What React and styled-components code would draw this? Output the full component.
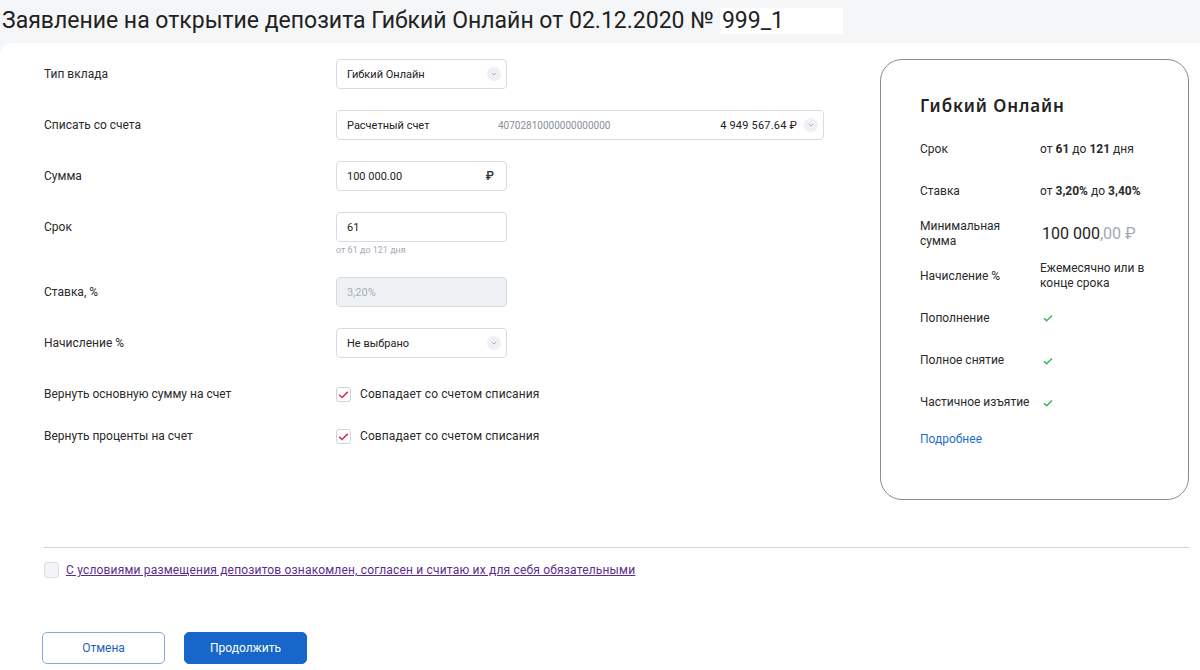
import React from 'react';
import styled, { createGlobalStyle } from 'styled-components';

const GlobalStyle = createGlobalStyle`
  html, body {
    margin: 0;
    padding: 0;
    background: #f5f6f8;
    font-family: Roboto, "Liberation Sans", sans-serif;
    color: #222;
  }
  * { box-sizing: border-box; }
`;

const Chevron = () => (
  <ChevronCircle>
    <svg width="8" height="8" viewBox="0 0 8 8">
      <path d="M2 3l2 2 2-2" fill="none" stroke="#a9b0ba" strokeWidth="1" />
    </svg>
  </ChevronCircle>
);

const Tick = ({ color = '#2fb45c', size = 12 }) => (
  <svg width={size} height={size} viewBox="0 0 12 12">
    <path d="M2 6.2l2.6 2.6L10 3.6" fill="none" stroke={color} strokeWidth="1.4" />
  </svg>
);

const App = () => {
  return (
    <Page>
      <GlobalStyle />
      <Header>
        <HeaderText>Заявление на открытие депозита Гибкий Онлайн от 02.12.2020 №</HeaderText>
        <NumberBox>999_1</NumberBox>
      </Header>

      <Panel>
        <Top>
          <Form>
            <Row>
              <Label>Тип вклада</Label>
              <Box width="171px">
                <Value>Гибкий Онлайн</Value>
                <Chevron />
              </Box>
            </Row>
            <Row>
              <Label>Списать со счета</Label>
              <Box width="488px">
                <AccountName>Расчетный счет</AccountName>
                <AccountNumber>40702810000000000000</AccountNumber>
                <Balance>4 949 567.64 ₽</Balance>
                <Chevron />
              </Box>
            </Row>
            <Row>
              <Label>Сумма</Label>
              <Box width="171px">
                <Value>100 000.00</Value>
                <Rub>₽</Rub>
              </Box>
            </Row>
            <Group>
              <Row>
                <Label>Срок</Label>
                <Box width="171px">
                  <Value>61</Value>
                </Box>
              </Row>
              <Hint>от 61 до 121 дня</Hint>
            </Group>
            <Row>
              <Label>Ставка, %</Label>
              <Box width="171px" disabled>
                <Value muted>3,20%</Value>
              </Box>
            </Row>
            <Row>
              <Label>Начисление %</Label>
              <Box width="171px">
                <Value>Не выбрано</Value>
                <Chevron />
              </Box>
            </Row>
            <Checks>
              <CheckRow>
                <Label>Вернуть основную сумму на счет</Label>
                <CheckLine>
                  <CheckBox><Tick color="#d42a5b" size={13} /></CheckBox>
                  <CheckText>Совпадает со счетом списания</CheckText>
                </CheckLine>
              </CheckRow>
              <CheckRow>
                <Label>Вернуть проценты на счет</Label>
                <CheckLine>
                  <CheckBox><Tick color="#d42a5b" size={13} /></CheckBox>
                  <CheckText>Совпадает со счетом списания</CheckText>
                </CheckLine>
              </CheckRow>
            </Checks>
          </Form>

          <Card>
            <CardTitle>Гибкий Онлайн</CardTitle>
            <InfoRow>
              <InfoLabel>Срок</InfoLabel>
              <InfoValue>от <b>61</b> до <b>121</b> дня</InfoValue>
            </InfoRow>
            <InfoRow>
              <InfoLabel>Ставка</InfoLabel>
              <InfoValue>от <b>3,20%</b> до <b>3,40%</b></InfoValue>
            </InfoRow>
            <InfoRow>
              <InfoLabel>Минимальная<br />сумма</InfoLabel>
              <Amount>100 000<Cents>,00 ₽</Cents></Amount>
            </InfoRow>
            <InfoRow>
              <InfoLabel>Начисление %</InfoLabel>
              <InfoValue>Ежемесячно или в конце срока</InfoValue>
            </InfoRow>
            <InfoRow>
              <InfoLabel>Пополнение</InfoLabel>
              <InfoValue><Tick /></InfoValue>
            </InfoRow>
            <InfoRow>
              <InfoLabel>Полное снятие</InfoLabel>
              <InfoValue><Tick /></InfoValue>
            </InfoRow>
            <InfoRow>
              <InfoLabel>Частичное изъятие</InfoLabel>
              <InfoValue><Tick /></InfoValue>
            </InfoRow>
            <MoreLink href="#">Подробнее</MoreLink>
          </Card>
        </Top>

        <Divider />

        <Consent>
          <EmptyBox />
          <ConsentLink href="#">С условиями размещения депозитов ознакомлен, согласен и считаю их для себя обязательными</ConsentLink>
        </Consent>

        <Buttons>
          <Button>Отмена</Button>
          <Button primary>Продолжить</Button>
        </Buttons>
      </Panel>
    </Page>
  );
};

// стили
const Page = styled.div`
  min-height: 670px;
  display: flex;
  flex-direction: column;
`;

const Header = styled.div`
  height: 43px;
  display: flex;
  align-items: center;
  padding-left: 2px;
  padding-bottom: 2px;
`;

const HeaderText = styled.h1`
  margin: 0;
  font-size: 23px;
  font-weight: 400;
  letter-spacing: 0;
  color: #222;
  white-space: nowrap;
`;

const NumberBox = styled.span`
  margin-left: 6px;
  padding-left: 2px;
  width: 123px;
  height: 26px;
  background: #fff;
  font-size: 23px;
  line-height: 26px;
  color: #222;
`;

const Panel = styled.div`
  flex: 1;
  background: #fff;
  border-top-left-radius: 12px;
  padding: 16px 11px 8px 44px;
`;

const Top = styled.div`
  display: flex;
  align-items: flex-start;
`;

const Form = styled.div`
  flex: 1;
  display: flex;
  flex-direction: column;
  gap: 21px;
`;

const Row = styled.div`
  display: grid;
  grid-template-columns: 292px 1fr;
  align-items: center;
  min-height: 30px;
`;

const Group = styled.div`
  display: flex;
  flex-direction: column;
`;

const Label = styled.div`
  font-size: 12px;
  color: #2a2a2a;
`;

const Box = styled.div`
  width: ${p => p.width};
  height: 30px;
  display: flex;
  align-items: center;
  padding: 0 5px 0 10px;
  border: 1px solid #d8dce2;
  border-radius: 4px;
  background: ${p => (p.disabled ? '#eef1f4' : '#fff')};
`;

const Value = styled.span`
  flex: 1;
  font-size: 11px;
  color: ${p => (p.muted ? '#a7afb8' : '#222')};
`;

const AccountName = styled.span`
  width: 151px;
  font-size: 11px;
  color: #222;
`;

const AccountNumber = styled.span`
  flex: 1;
  font-size: 10px;
  color: #8a9099;
`;

const Balance = styled.span`
  font-size: 11px;
  color: #222;
  letter-spacing: 0.2px;
  margin-right: 7px;
`;

const Rub = styled.span`
  font-size: 12px;
  font-weight: 500;
  color: #333;
  margin-right: 7px;
`;

const ChevronCircle = styled.span`
  width: 14px;
  height: 14px;
  border-radius: 50%;
  background: #eef0f3;
  display: flex;
  align-items: center;
  justify-content: center;
`;

const Hint = styled.div`
  margin: 3px 0 0 292px;
  font-size: 9px;
  color: #a5abb3;
  line-height: 11px;
`;

const Checks = styled.div`
  margin-top: 7px;
  display: flex;
  flex-direction: column;
  gap: 26px;
`;

const CheckRow = styled.div`
  display: grid;
  grid-template-columns: 292px 1fr;
  align-items: center;
  height: 16px;
`;

const CheckLine = styled.div`
  display: flex;
  align-items: center;
  gap: 9px;
`;

const CheckBox = styled.span`
  width: 15px;
  height: 15px;
  border: 1px solid #cfd3d9;
  border-radius: 3px;
  display: flex;
  align-items: center;
  justify-content: center;
  background: #fff;
`;

const CheckText = styled.span`
  font-size: 12px;
  letter-spacing: 0.1px;
  color: #2a2a2a;
`;

const Card = styled.div`
  width: 309px;
  height: 441px;
  border: 1px solid #8c8c8c;
  border-radius: 22px;
  padding: 34px 20px 0 39px;
`;

const CardTitle = styled.div`
  font-family: "Noto Sans", Inter, sans-serif;
  font-size: 17px;
  font-weight: 600;
  letter-spacing: 0.9px;
  color: #222;
  height: 24px;
  line-height: 24px;
  margin-bottom: 10px;
`;

const InfoRow = styled.div`
  display: grid;
  grid-template-columns: 120px 1fr;
  align-items: center;
  height: 42.3px;
`;

const InfoLabel = styled.div`
  font-size: 12px;
  color: #2a2a2a;
  line-height: 15px;
`;

const InfoValue = styled.div`
  font-size: 12px;
  color: #2a2a2a;
  line-height: 15px;
  max-width: 112px;
  display: flex;
  flex-wrap: wrap;
  column-gap: 3px;

  b { font-weight: 700; }
  svg { margin-left: 2px; }
`;

const Amount = styled.div`
  font-size: 16px;
  color: #222;
  padding-left: 2px;
`;

const Cents = styled.span`
  color: #a0a9b6;
`;

const MoreLink = styled.a`
  display: block;
  margin-top: 8px;
  font-size: 12px;
  color: #1e6fcb;
  text-decoration: none;
`;

const Divider = styled.div`
  margin-top: 47px;
  height: 1px;
  background: #d3d3d3;
`;

const Consent = styled.div`
  margin-top: 14px;
  display: flex;
  align-items: center;
  gap: 7px;
`;

const EmptyBox = styled.span`
  width: 15px;
  height: 16px;
  border: 1px solid #dcdfe4;
  border-radius: 3px;
  background: #f3f4f6;
`;

const ConsentLink = styled.a`
  font-size: 12px;
  color: #5b2d8e;
  text-decoration: underline;
  letter-spacing: 0.18px;
`;

const Buttons = styled.div`
  margin-top: 54px;
  margin-left: -2px;
  display: flex;
  gap: 19px;
`;

const Button = styled.button`
  width: 123px;
  height: 32px;
  border-radius: 5px;
  font-family: Roboto, "Liberation Sans", sans-serif;
  font-size: 12px;
  cursor: pointer;
  border: 1px solid ${p => (p.primary ? '#1766c9' : '#86a8e2')};
  background: ${p => (p.primary ? '#1766c9' : '#fff')};
  color: ${p => (p.primary ? '#fff' : '#1f5fbf')};
`;

export default App;
